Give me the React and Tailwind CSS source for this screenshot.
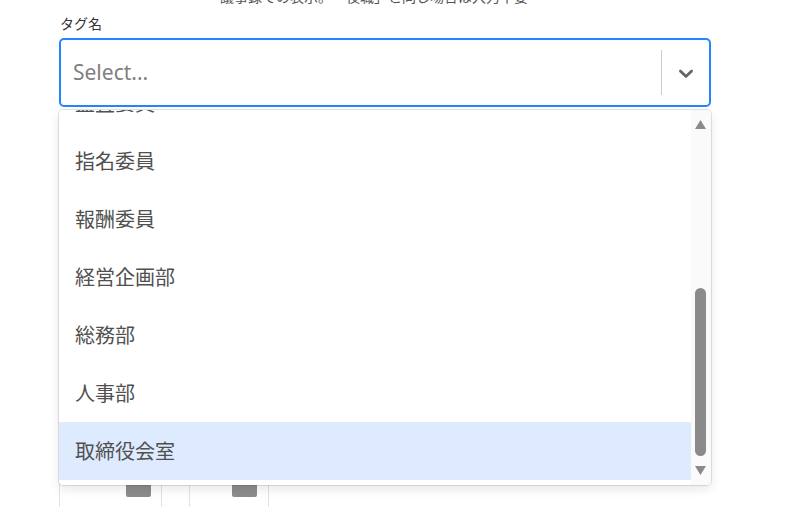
import React from "react";

const options = ["監査委員", "指名委員", "報酬委員", "経営企画部", "総務部", "人事部", "取締役会室"];

const font = { fontFamily: '"Noto Sans", "Noto Sans CJK JP", sans-serif' };

const Chevron = () => (
  <svg viewBox="0 0 20 20" className="w-[24px] h-[24px] fill-[#666666]">
    <path d="M4.516 7.548c0.436-0.446 1.043-0.481 1.576 0l3.908 3.747 3.908-3.747c0.533-0.481 1.141-0.446 1.574 0 0.436 0.445 0.408 1.197 0 1.615-0.406 0.418-4.695 4.502-4.695 4.502-0.217 0.223-0.502 0.335-0.787 0.335s-0.57-0.112-0.789-0.335c0 0-4.287-4.084-4.695-4.502s-0.436-1.17 0-1.615z" />
  </svg>
);

const Scrollbar = () => (
  <svg width="20" height="375" className="block">
    <rect x="0" y="0" width="20" height="375" fill="#fafafa" />
    <polygon points="4,19 15,19 9.5,10" fill="#8a8a8a" />
    <rect x="4" y="178" width="11" height="168" rx="5.5" fill="#8a8a8a" />
    <polygon points="4,356 15,356 9.5,365" fill="#8a8a8a" />
  </svg>
);

export default function App() {
  return (
    <div className="relative w-[798px] h-[507px] overflow-hidden bg-white" style={font}>
      {/* cut-off hint line at top */}
      <div className="h-[7px] overflow-hidden pl-[220px]">
        <p className="-mt-[10px] text-[14px] leading-[14px] text-[#555] whitespace-nowrap">
          議事録での表示。　「役職」と同じ場合は入力不要
        </p>
      </div>

      <div className="pl-[59px] w-[711px]">
        <label className="block mt-[8px] pl-[1px] text-[14px] leading-[18px] text-[#333]">タグ名</label>

        <div className="mt-[5px] h-[69px] flex items-center border-2 border-[#2684FF] rounded-[5px] bg-white">
          <div className="flex-1 pl-[12px] text-[21px] text-[#808080]">Select...</div>
          <div className="w-px self-stretch my-[10px] bg-[#cccccc]" />
          <div className="w-[47px] flex items-center justify-center">
            <Chevron />
          </div>
        </div>

        {/* form content behind the open menu */}
        <div className="h-[373px]" />
        <div className="flex h-[30px] pt-[3px]">
          <div className="w-[103px] border-x border-[#e2e2e2] flex justify-end pr-[10px]">
            <div className="w-[25px] h-[14px] rounded-[2px] bg-[#8c8c8c]" />
          </div>
          <div className="w-[27px]" />
          <div className="w-[80px] border-x border-[#e2e2e2] flex justify-end pr-[11px]">
            <div className="w-[25px] h-[14px] rounded-[2px] bg-[#8c8c8c]" />
          </div>
        </div>
      </div>

      {/* open dropdown menu */}
      <div className="absolute top-[110px] left-[59px] w-[652px] h-[375px] flex overflow-hidden rounded-[4px] bg-white shadow-[0_0_0_1px_rgba(0,0,0,0.1),0_4px_11px_rgba(0,0,0,0.1)]">
        <div className="flex-1 overflow-hidden">
          <div className="-mt-[36px]">
            {options.map((opt, i) => (
              <div
                key={opt}
                className={
                  "h-[58px] flex items-center pl-[16px] pt-[2px] text-[20px] text-[#505050] " +
                  (i === options.length - 1 ? "bg-[#DEEBFF]" : "")
                }
              >
                {opt}
              </div>
            ))}
          </div>
        </div>
        <Scrollbar />
      </div>
    </div>
  );
}
